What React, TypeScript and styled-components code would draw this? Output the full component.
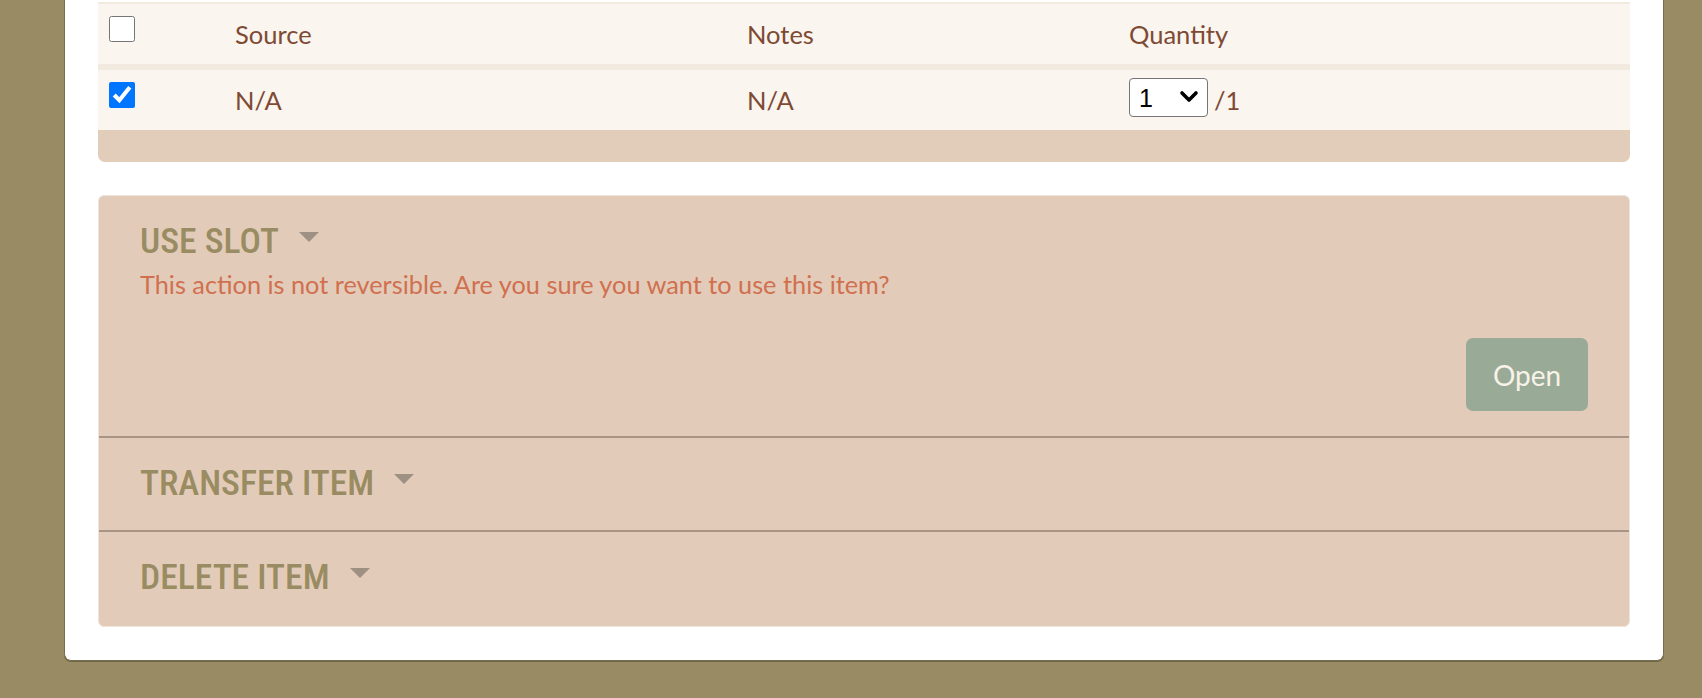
import React from "react";
import styled, { createGlobalStyle } from "styled-components";

const GlobalStyle = createGlobalStyle`
  html, body {
    margin: 0;
    padding: 0;
    background: #998b64;
    min-height: 100%;
  }
  body {
    font-family: Lato, "Liberation Sans", sans-serif;
  }
`;

const Page = styled.div`
  padding: 0 38px 38px 64px;
`;

const Card = styled.div`
  background: #ffffff;
  border: 1px solid #766d4c;
  border-top: none;
  border-radius: 0 0 7px 7px;
  box-shadow: 0 1px 0 #6e6646;
  padding: 2px 33px 33px 33px;
`;

const Table = styled.div`
  background: #e1cdb9;
  border-top: 2px solid #f2e9df;
  border-radius: 0 0 7px 7px;
  padding-bottom: 32px;
`;

const Row = styled.div<{ $head?: boolean }>`
  display: grid;
  grid-template-columns: 125px 512px 382px 1fr;
  background: #faf5ef;
  border-bottom: ${(p) => (p.$head ? "6px solid #f2e9df" : "none")};
`;

const Cell = styled.div<{ $check?: boolean }>`
  padding: ${(p) => (p.$check ? "12px 11px" : "12px")};
  font-size: 25.5px;
  line-height: 36px;
  color: #7e4a34;
`;

const QuantityCell = styled.div`
  display: flex;
  align-items: flex-start;
  gap: 6px;
  padding: 12px;
  font-size: 25.5px;
  line-height: 36px;
  color: #7e4a34;
`;

const Check = styled.input`
  display: block;
  width: 26px;
  height: 26px;
  margin: 0;
`;

const SelectWrap = styled.span`
  position: relative;
  display: block;
  margin-top: -4px;
  width: 79px;
  height: 39px;
`;

const QtySelect = styled.select`
  appearance: none;
  -webkit-appearance: none;
  display: block;
  width: 79px;
  height: 39px;
  box-sizing: border-box;
  font-family: "Liberation Sans", Arial, sans-serif;
  font-size: 25px;
  color: #000;
  background: #fff;
  border: 1.5px solid #767676;
  border-radius: 4px;
  padding: 0 30px 0 9px;
`;

const Chevron = styled.svg`
  position: absolute;
  right: 9px;
  top: 12px;
  width: 20px;
  height: 14px;
  pointer-events: none;
`;

const Accordion = styled.div`
  margin-top: 33px;
  background: #e3cbb9;
  border: 1px solid #f0e5da;
  border-radius: 6px;
`;

const Section = styled.div`
  padding: 24px 41px 25px;
  & + & {
    border-top: 2px solid #a99585;
  }
  &:last-child {
    padding-bottom: 27px;
  }
`;

const Heading = styled.div`
  display: flex;
  align-items: center;
  font-family: "Roboto Condensed", "Liberation Sans Narrow", Roboto, sans-serif;
  font-stretch: condensed;
  font-weight: 500;
  font-size: 35.6px;
  line-height: 43px;
  color: #998c63;
`;

const Caret = styled.span`
  width: 0;
  height: 0;
  margin-left: 20px;
  margin-bottom: 9px;
  border-left: 10.5px solid transparent;
  border-right: 10.5px solid transparent;
  border-top: 10.5px solid #9e9082;
`;

const Warning = styled.p`
  margin: 3px 0 0;
  font-size: 25.3px;
  line-height: 36px;
  color: #d0704f;
`;

const ButtonRow = styled.div`
  display: flex;
  justify-content: flex-end;
  margin-top: 36px;
`;

const OpenButton = styled.button`
  width: 122px;
  height: 73px;
  background: #99aa97;
  color: #f8f2e8;
  border: none;
  border-radius: 7px;
  font-family: Lato, sans-serif;
  font-size: 28px;
`;

export default function App() {
  return (
    <>
      <GlobalStyle />
      <Page>
        <Card>
          <Table>
            <Row $head>
              <Cell $check>
                <Check type="checkbox" readOnly />
              </Cell>
              <Cell>Source</Cell>
              <Cell>Notes</Cell>
              <Cell>Quantity</Cell>
            </Row>
            <Row>
              <Cell $check>
                <Check type="checkbox" defaultChecked />
              </Cell>
              <Cell>N/A</Cell>
              <Cell>N/A</Cell>
              <QuantityCell>
                <SelectWrap>
                  <QtySelect defaultValue="1">
                    <option value="1">1</option>
                  </QtySelect>
                  <Chevron viewBox="0 0 20 14">
                    <path
                      d="M3 3 L10 10 L17 3"
                      fill="none"
                      stroke="#000"
                      strokeWidth="3.6"
                      strokeLinecap="round"
                      strokeLinejoin="round"
                    />
                  </Chevron>
                </SelectWrap>
                <span>/1</span>
              </QuantityCell>
            </Row>
          </Table>
          <Accordion>
            <Section>
              <Heading>
                USE SLOT
                <Caret />
              </Heading>
              <Warning>
                This action is not reversible. Are you sure you want to use this item?
              </Warning>
              <ButtonRow>
                <OpenButton>Open</OpenButton>
              </ButtonRow>
            </Section>
            <Section>
              <Heading>
                TRANSFER ITEM
                <Caret />
              </Heading>
            </Section>
            <Section>
              <Heading>
                DELETE ITEM
                <Caret />
              </Heading>
            </Section>
          </Accordion>
        </Card>
      </Page>
    </>
  );
}
